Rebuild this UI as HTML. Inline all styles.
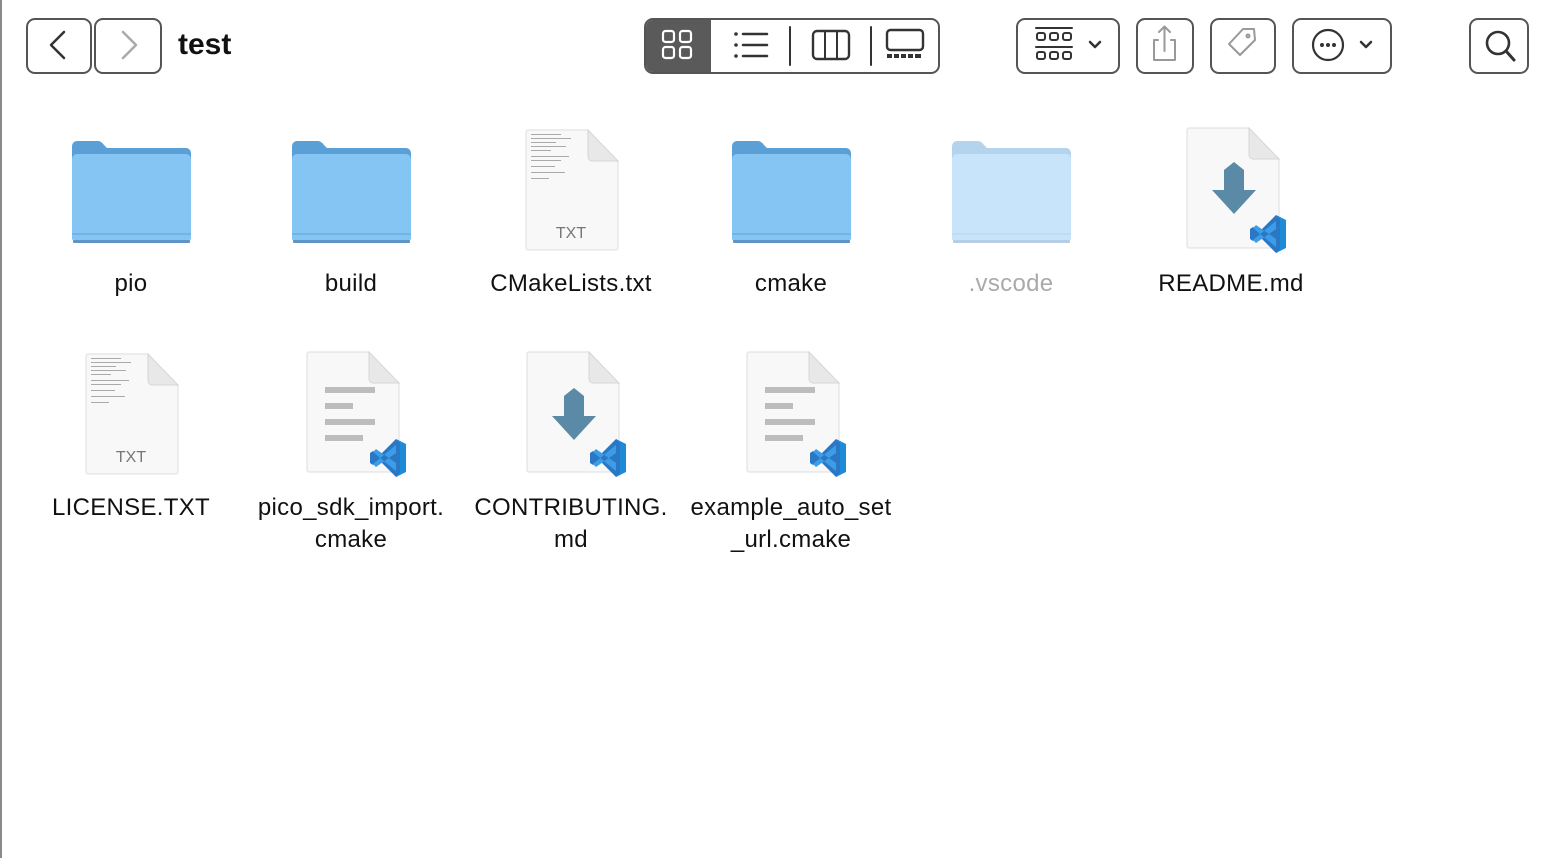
<!DOCTYPE html>
<html><head><meta charset="utf-8"><style>
html,body{margin:0;padding:0;width:1544px;height:858px;background:#fff;overflow:hidden;font-family:"Liberation Sans",Arial,sans-serif}
.lb{position:absolute;left:0;top:0;width:2px;height:858px;background:#8a8a8a}
.btn{position:absolute;border:2px solid #555;border-radius:9px;box-sizing:border-box}
svg{position:absolute;overflow:visible}
.lbl{position:absolute;width:260px;text-align:center;font-size:24px;letter-spacing:0.3px;color:#111;line-height:32px}
</style></head><body>
<div class="lb"></div>
<div class="btn" style="left:26px;top:18px;width:66px;height:56px"></div>
<div class="btn" style="left:94px;top:18px;width:68px;height:56px"></div>
<svg style="left:0;top:0" width="1544" height="90">
<path d="M64 32 L51 45 L64 58" fill="none" stroke="#333" stroke-width="2.5" stroke-linecap="round" stroke-linejoin="round"/>
<path d="M123 32 L136 45 L123 58" fill="none" stroke="#aaa" stroke-width="2.5" stroke-linecap="round" stroke-linejoin="round"/>
</svg>
<div style="position:absolute;left:178px;top:28px;font-size:30px;font-weight:bold;color:#111">test</div>
<div class="btn" style="left:644px;top:18px;width:296px;height:56px;overflow:hidden"><div style="position:absolute;left:0;top:0;width:65px;height:56px;background:#5a5a5a"></div></div>
<div class="btn" style="left:1016px;top:18px;width:104px;height:56px"></div>
<div class="btn" style="left:1136px;top:18px;width:58px;height:56px"></div>
<div class="btn" style="left:1210px;top:18px;width:66px;height:56px"></div>
<div class="btn" style="left:1292px;top:18px;width:100px;height:56px"></div>
<div class="btn" style="left:1469px;top:18px;width:60px;height:56px"></div>
<svg style="left:0;top:0" width="1544" height="90" fill="none" stroke-linecap="round" stroke-linejoin="round">
<g stroke="#fff" stroke-width="2.2"><rect x="663" y="31" width="11" height="11" rx="2.5"/><rect x="680" y="31" width="11" height="11" rx="2.5"/><rect x="663" y="47" width="11" height="11" rx="2.5"/><rect x="680" y="47" width="11" height="11" rx="2.5"/></g>
<g stroke="#333" stroke-width="2.5"><path d="M743 34h24M743 45h24M743 56h24"/></g>
<g fill="#333"><circle cx="736" cy="34" r="1.8"/><circle cx="736" cy="45" r="1.8"/><circle cx="736" cy="56" r="1.8"/></g>
<g stroke="#333" stroke-width="2"><path d="M790 27v38M871 27v38"/>
<rect x="813" y="31" width="36" height="28" rx="4" stroke-width="2.4"/><path d="M825 31v28M837 31v28"/>
<rect x="887" y="30" width="36" height="20" rx="3.5" stroke-width="2.4"/></g>
<g fill="#333"><rect x="887" y="54" width="5" height="4"/><rect x="894" y="54" width="5" height="4"/><rect x="901" y="54" width="5" height="4"/><rect x="908" y="54" width="5" height="4"/><rect x="915" y="54" width="6" height="4"/></g>
<g stroke="#333" stroke-width="2"><path d="M1036 28h36M1036 47h36"/>
<rect x="1037" y="33" width="8" height="7" rx="2"/><rect x="1050" y="33" width="8" height="7" rx="2"/><rect x="1063" y="33" width="8" height="7" rx="2"/>
<rect x="1037" y="52" width="8" height="7" rx="2"/><rect x="1050" y="52" width="8" height="7" rx="2"/><rect x="1063" y="52" width="8" height="7" rx="2"/>
<path d="M1090 42l5 5 5-5" stroke-width="2.5"/></g>
<g stroke="#999" stroke-width="2"><path d="M1158 40h-4v20h21v-20h-4M1164.5 51V27M1159 32l5.5-5.5 5.5 5.5"/>
<path d="M1229 44l14-15h11l1 11-15 15z"/><circle cx="1248" cy="36" r="1.5"/></g>
<g stroke="#333" stroke-width="2.2"><circle cx="1328" cy="45" r="15"/><path d="M1361 42l5 5 5-5" stroke-width="2.5"/>
<circle cx="1498" cy="43" r="11" stroke-width="2.6"/><path d="M1506 51l8 9" stroke-width="3"/></g>
<g fill="#333"><circle cx="1322" cy="45" r="2"/><circle cx="1328" cy="45" r="2"/><circle cx="1334" cy="45" r="2"/></g>
</svg>

<svg width="0" height="0">
<defs>
<g id="fold">
<path d="M0 5 a5 5 0 0 1 5-5 h21 q3 0 6 4 l3 3 h79 a5 5 0 0 1 5 5 v85 a3 3 0 0 1-3 3 h-113 a3 3 0 0 1-3-3z" fill="#5a9fd6"/>
<rect x="0" y="13" width="119" height="88" rx="5" fill="#84c5f4"/>
<rect x="0" y="92" width="119" height="2" fill="#73b3e6"/>
<rect x="1" y="99" width="117" height="3" rx="1" fill="#5e95c6"/>
</g>
<g id="doc">
<path d="M3 0 h60 l30 32 v86 a2 2 0 0 1-2 2 h-88 a2 2 0 0 1-2-2 v-116 a2 2 0 0 1 2-2z" fill="#f8f8f8" stroke="#dedede"/>
<path d="M63 0 v27 a4 4 0 0 0 4 4 h26z" fill="#e8e8e8" stroke="#d6d6d6"/>
</g>
<g id="vs">
<path d="M26 0 l10 5 v28 l-10 5 z" fill="#1f8ad8"/>
<path d="M26 0 L9 17 L3 12 L0 14 v10 l3 2 l6-5 L26 38 l4-4 V4z" fill="#2a78c5"/>
<path d="M3 13 L26 32 v-8 L6 10z M3 25 L26 6 v8 L6 28z" fill="#3c9de6"/>
</g>
<g id="down"><path d="M24 0 l10 8 v20 h12 l-22 24 l-22-24 h12 v-20z" fill="#5a8aa5"/></g>
<g id="lines" fill="#bdbdbd"><rect x="0" y="0" width="50" height="6"/><rect x="0" y="16" width="28" height="6"/><rect x="0" y="32" width="50" height="6"/><rect x="0" y="48" width="38" height="6"/></g>
<g id="txtlines" fill="#aaa"><rect x="0" y="0" width="30" height="1"/><rect x="0" y="4" width="40" height="1"/><rect x="0" y="8" width="25" height="1"/><rect x="0" y="12" width="35" height="1"/><rect x="0" y="16" width="20" height="1"/><rect x="0" y="22" width="38" height="1"/><rect x="0" y="26" width="30" height="1"/><rect x="0" y="32" width="24" height="1"/><rect x="0" y="38" width="34" height="1"/><rect x="0" y="44" width="18" height="1"/></g>
</defs>
</svg>

<svg style="left:0;top:0" width="1544" height="858">
<use href="#fold" x="72" y="141"/>
<use href="#fold" x="292" y="141"/>
<use href="#fold" x="732" y="141"/>
<g opacity="0.45"><use href="#fold" x="952" y="141"/></g>
<use href="#doc" x="525" y="130"/><use href="#txtlines" x="531" y="134"/>
<text x="571" y="238" font-family="Liberation Sans" font-size="16" fill="#777" text-anchor="middle">TXT</text>
<use href="#doc" x="1186" y="128"/><use href="#down" x="1210" y="162"/><use href="#vs" x="1250" y="215"/>
<use href="#doc" x="85" y="354"/><use href="#txtlines" x="91" y="358"/>
<text x="131" y="462" font-family="Liberation Sans" font-size="16" fill="#777" text-anchor="middle">TXT</text>
<use href="#doc" x="306" y="352"/><use href="#lines" x="325" y="387"/><use href="#vs" x="370" y="439"/>
<use href="#doc" x="526" y="352"/><use href="#down" x="550" y="388"/><use href="#vs" x="590" y="439"/>
<use href="#doc" x="746" y="352"/><use href="#lines" x="765" y="387"/><use href="#vs" x="810" y="439"/>
</svg>

<div class="lbl" style="left:1px;top:268px">pio</div>
<div class="lbl" style="left:221px;top:268px">build</div>
<div class="lbl" style="left:441px;top:268px">CMakeLists.txt</div>
<div class="lbl" style="left:661px;top:268px">cmake</div>
<div class="lbl" style="left:881px;top:268px;color:#aaa">.vscode</div>
<div class="lbl" style="left:1101px;top:268px">README.md</div>
<div class="lbl" style="left:1px;top:492px">LICENSE.TXT</div>
<div class="lbl" style="left:221px;top:492px">pico_sdk_import.<br>cmake</div>
<div class="lbl" style="left:441px;top:492px">CONTRIBUTING.<br>md</div>
<div class="lbl" style="left:661px;top:492px">example_auto_set<br>_url.cmake</div>
</body></html>
